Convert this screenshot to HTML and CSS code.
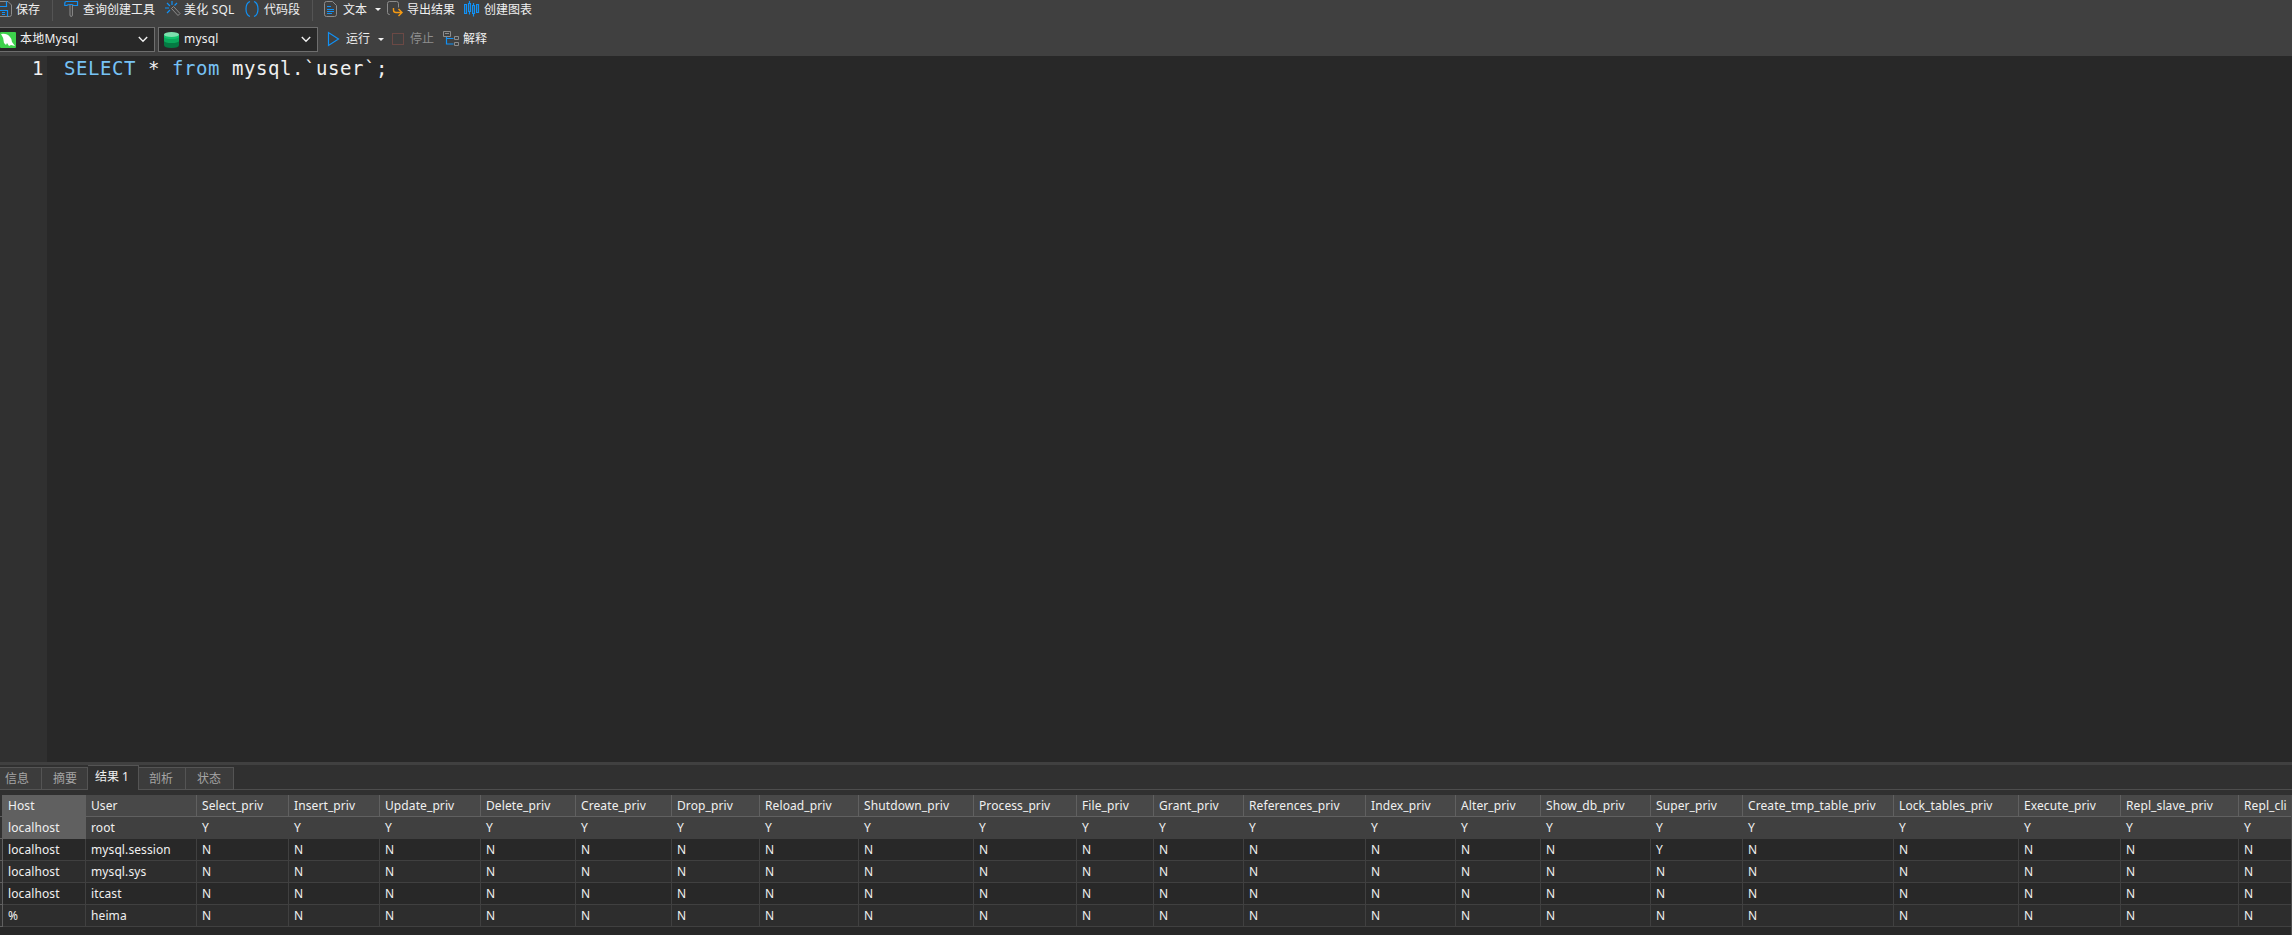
FILE: index.html
```html
<!DOCTYPE html>
<html lang="zh">
<head>
    <meta charset="UTF-8">
    <title>mysql</title>
    <link rel="stylesheet" href="styles.css">
</head>
<body>
    <div class="toolbar">
        <div class="tools">
            <svg class="icon save" width="12" height="18" viewBox="0 0 12 18">
                <path class="gray" d="M0 1.500h8l3.500 3.500v9.500q0 2-2 2H0"/>
                <path class="blue" d="M0 6.500h6.500v-5M0 10.500h7.500v6M2 12.500h3M2 14.500h3"/>
            </svg>
            <span class="label l-save">保存</span>
            <i class="sep s1"></i>
            <svg class="icon builder" width="15" height="18" viewBox="0 0 15 18">
                <path class="blue" d="M.8 5.500v-2q0-2 2-2h10.700v4H9.500q-1-1-2-1-4 0-5 1z"/>
                <path class="gray" d="M6 5v10q0 1.500 1.200 1.500t1.200-1.500V5"/>
            </svg>
            <span class="label l-builder">查询创建工具</span>
            <svg class="icon beautify" width="16" height="18" viewBox="0 0 16 18">
                <path class="blue" d="M7 1v4M0 8h4M2 3l3 3M12 3L9.500 5.500M2 13l3-3"/>
                <path class="gray" d="M6.500 8.500l2-2 6.500 7-2 2z"/>
            </svg>
            <span class="label l-beautify">美化 SQL</span>
            <svg class="icon snippet" width="14" height="18" viewBox="0 0 14 18">
                <path class="blue" d="M5 1.500Q1 3 1 9t4 7.500M9 1.500Q13 3 13 9t-4 7.500"/>
            </svg>
            <span class="label l-snippet">代码段</span>
            <i class="sep s2"></i>
            <svg class="icon text" width="14" height="18" viewBox="0 0 14 18">
                <path class="gray" d="M2.500 1.500h6L12.500 5.500v9q0 2-2 2h-8q-2 0-2-2v-11q0-2 2-2z"/>
                <path class="blue" d="M3 6.500h4M3 9.500h7M3 11.500h7M3 13.500h5"/>
            </svg>
            <span class="label l-text">文本</span>
            <i class="drop d1"></i>
            <svg class="icon export" width="16" height="18" viewBox="0 0 16 18">
                <path class="gray" d="M3 14.500H2.500q-2 0-2-2v-9q0-2 2-2h7q2 0 2 2v4"/>
                <path class="orange" d="M6.500 8v2q0 2.500 2.500 2.500h6M11.500 9l3.500 3.500-3.500 3.500"/>
            </svg>
            <span class="label l-export">导出结果</span>
            <svg class="icon chart" width="16" height="18" viewBox="0 0 16 18">
                <path class="blue" d="M.6 4.500h1.900v9H.6zM5.500 1v2M4.600 3.500h1.900v8H4.600zM5.500 11.500v3M8.600 5.500h1.900v8H8.600zM9.500 3v2.500M9.500 13.500v3M12.600 4.500h1.900v8h-1.900z"/>
            </svg>
            <span class="label l-chart">创建图表</span>
        </div>
        <div class="connection">
            <div class="combo server">
                <svg width="16" height="16" viewBox="0 0 16 16">
                    <rect width="16" height="16" rx="1" fill="#3dd14b"/>
                    <path d="M1 2q6-1 9 3 2 2 2 5l3 4-4-1-2 1-2-3-1 2-2-2Q4 6 1 2z" fill="#fff"/>
                </svg>
                <span>本地Mysql</span>
                <svg class="chevron" width="10" height="7" viewBox="0 0 10 7"><path d="M.8 1L5 5.200 9.200 1"/></svg>
            </div>
            <div class="combo database">
                <svg width="15" height="16" viewBox="0 0 15 16">
                    <path d="M0 2.500h15v10.500q0 3-7.500 3T0 13z" fill="#057a43"/>
                    <path d="M0 2.500h15V9q-1 2-7.500 2T0 9z" fill="#0aa85b"/>
                    <path d="M0 2.500h15v2.500q-1 2-7.500 2T0 5z" fill="#10c46c"/>
                    <ellipse cx="7.500" cy="2.500" rx="7.500" ry="2.500" fill="#7ce0ad"/>
                </svg>
                <span>mysql</span>
                <svg class="chevron" width="10" height="7" viewBox="0 0 10 7"><path d="M.8 1L5 5.200 9.200 1"/></svg>
            </div>
            <svg class="icon run" width="13" height="16" viewBox="0 0 13 16">
                <path class="blue" d="M1.500 1.500v13L11.500 8z"/>
            </svg>
            <span class="label l-run">运行</span>
            <i class="drop d2"></i>
            <i class="stop"></i>
            <span class="label l-stop">停止</span>
            <svg class="icon explain" width="17" height="17" viewBox="0 0 17 17">
                <path class="gray" d="M.5 1.500h7v5h-7zM2 3.500h4M11.500 6.500h4v3h-4zM11.500 12.500h4v3h-4z"/>
                <path class="blue" d="M3.500 7v7h7M3.500 8.500h7"/>
            </svg>
            <span class="label l-explain">解释</span>
        </div>
    </div>

    <div class="editor">
        <div class="gutter">1</div>
        <pre class="code"><b>SELECT</b> * <b>from</b> mysql.`user`;</pre>
    </div>

    <div class="tabs">
        <div class="tab t-info">信息</div>
        <div class="tab t-summary">摘要</div>
        <div class="tab t-result active">结果 1</div>
        <div class="tab t-profile">剖析</div>
        <div class="tab t-status">状态</div>
    </div>

    <div class="results">
        <div class="marker"></div>
        <table class="grid" id="grid"></table>
    </div>

    <script src="grid.js"></script>
</body>
</html>
```
FILE: styles.css
```css
* {
    box-sizing: border-box;
}
body {
    margin: 0;
    width: 100vw;
    height: 100vh;
    overflow: hidden;
    display: flex;
    flex-direction: column;
    background: #303030;
    color: #f0f0f0;
    font: 12px "Noto Sans", "Noto Sans CJK SC", sans-serif;
}
.toolbar {
    height: 56px;
    flex: none;
    background: #404040;
}
.tools {
    height: 21px;
    display: flex;
}
.connection {
    height: 35px;
    padding-top: 6px;
    display: flex;
}
.icon {
    flex: none;
    fill: none;
}
.gray {
    stroke: #8c8c8c;
}
.blue {
    stroke: #1191f5;
    stroke-width: 1.200;
}
.orange {
    stroke: #f59a13;
    stroke-width: 1.400;
}
.label {
    flex: none;
    line-height: 19px;
    white-space: nowrap;
}
.connection .label {
    line-height: 24px;
}
.save { margin-right: 4px; }
.l-save { width: 36px; }
.sep {
    width: 1px;
    height: 21px;
    background: #545454;
}
.s1 { margin-right: 11px; }
.builder { margin-right: 4px; }
.l-builder { width: 82px; }
.beautify { margin-right: 3px; }
.l-beautify {
    width: 61px;
    letter-spacing: .2px;
}
.snippet { margin-right: 5px; }
.l-snippet { width: 48px; }
.s2 { margin-right: 11px; }
.text { margin-right: 5px; }
.l-text { width: 32px; }
.drop {
    width: 6px;
    height: 3px;
    background: #f0f0f0;
    clip-path: polygon(0 0, 100% 0, 50% 100%);
}
.d1 { margin: 8px 6px 0 0; }
.export { margin-right: 4px; }
.l-export { width: 57px; }
.chart { margin-right: 4px; }
.combo {
    height: 25px;
    border: 1px solid #6e6e6e;
    background: #282828;
    display: flex;
    align-items: center;
}
.combo span {
    flex: 1;
    line-height: 20px;
    padding-bottom: 2px;
    letter-spacing: .2px;
}
.server {
    width: 155px;
    border-left: 0;
    padding-right: 6px;
    margin-right: 3px;
}
.server span { padding-left: 4px; }
.database {
    width: 160px;
    padding: 0 6px 0 5px;
    margin-right: 9px;
}
.database span { padding-left: 5px; }
.chevron {
    fill: none;
    stroke: #f0f0f0;
    stroke-width: 1.400;
}
.run { margin: 4px 6px 0 0; }
.l-run { width: 32px; }
.d2 { margin: 11px 8px 0 0; }
.stop {
    width: 12px;
    height: 12px;
    margin: 6px 6px 0 0;
    border: 1px solid #6b4945;
}
.l-stop {
    width: 33px;
    color: #8e8e8e;
}
.explain { margin: 3px 3px 0 0; }

.editor {
    height: 706px;
    flex: none;
    display: flex;
    background: #282828;
    font: 19px/24px "DejaVu Sans Mono", monospace;
    letter-spacing: .560px;
}
.gutter {
    width: 47px;
    padding-right: 3px;
    text-align: right;
    background: #303030;
}
.code {
    margin: 0;
    padding-left: 17px;
    font: inherit;
}
.code b {
    color: #77c2f5;
    font-weight: normal;
}

.tabs {
    height: 28px;
    flex: none;
    display: flex;
    align-items: flex-end;
    border-top: 3px solid #404040;
    background: linear-gradient(#4d4d4d, #4d4d4d) left bottom / 100% 1px no-repeat;
}
.tab {
    height: 23px;
    line-height: 22px;
    border: 1px solid #545454;
    border-left: 0;
    background: #3c3c3c;
    color: #a5a5a5;
}
.t-info { width: 42px; padding-left: 5px; }
.t-summary { width: 46px; padding-left: 11px; }
.t-result { width: 51px; padding-left: 7px; }
.t-profile { width: 47px; padding-left: 10px; }
.t-status { width: 48px; padding-left: 11px; }
.tab.active {
    height: 25px;
    background: #303030;
    border-bottom: 0;
    color: #f0f0f0;
}

.results {
    flex: 1;
    margin-top: 5px;
    display: flex;
    background: #282828;
    overflow: hidden;
    border-right: 1px solid #4d4d4d;
}
.marker {
    flex: none;
    width: 3px;
    height: 132px;
    border-right: 1px solid #606060;
    background: repeating-linear-gradient(#303030 0 21px, #606060 21px 22px);
}
.grid {
    flex: none;
    align-self: flex-start;
    table-layout: fixed;
    border-collapse: separate;
    border-spacing: 0;
    letter-spacing: .1px;
}
.grid th, .grid td {
    height: 22px;
    padding: 0 0 0 5px;
    border-right: 1px solid #404040;
    border-bottom: 1px solid #404040;
    line-height: 21px;
    font-weight: normal;
    text-align: left;
    white-space: nowrap;
    overflow: hidden;
}
.grid th {
    background: #484848;
    border-color: #606060;
}
.grid tr:nth-child(odd) td { background: #282828; }
.grid tr:nth-child(even) td { background: #2d2d2d; }
.grid tr.current td {
    background: #404040;
    border-color: #404040;
}
.grid th:first-child, .grid tr.current td:first-child {
    background: #606060;
    border-color: #606060;
}
```
FILE: grid.js
```js
const columns = [
    ["Host", 83], ["User", 111], ["Select_priv", 92], ["Insert_priv", 91],
    ["Update_priv", 101], ["Delete_priv", 95], ["Create_priv", 96], ["Drop_priv", 88],
    ["Reload_priv", 99], ["Shutdown_priv", 115], ["Process_priv", 103], ["File_priv", 77],
    ["Grant_priv", 90], ["References_priv", 122], ["Index_priv", 90], ["Alter_priv", 85],
    ["Show_db_priv", 110], ["Super_priv", 92], ["Create_tmp_table_priv", 151],
    ["Lock_tables_priv", 125], ["Execute_priv", 102], ["Repl_slave_priv", 118], ["Repl_cli", 53]
];
const users = [
    ["localhost", "root"],
    ["localhost", "mysql.session"],
    ["localhost", "mysql.sys"],
    ["localhost", "itcast"],
    ["%", "heima"]
];

const grid = document.getElementById("grid");
grid.style.width = columns.reduce((sum, c) => sum + c[1], 0) + "px";

let html = "<tr>" + columns.map(c => `<th style="width: ${c[1]}px">${c[0]}</th>`).join("") + "</tr>";
users.forEach(([host, user], i) => {
    const cells = columns.slice(2).map(([name]) => {
        const granted = user === "root" || (user === "mysql.session" && name === "Super_priv");
        return `<td>${granted ? "Y" : "N"}</td>`;
    });
    html += `<tr class="${i === 0 ? "current" : ""}"><td>${host}</td><td>${user}</td>${cells.join("")}</tr>`;
});
grid.innerHTML = html;
```
